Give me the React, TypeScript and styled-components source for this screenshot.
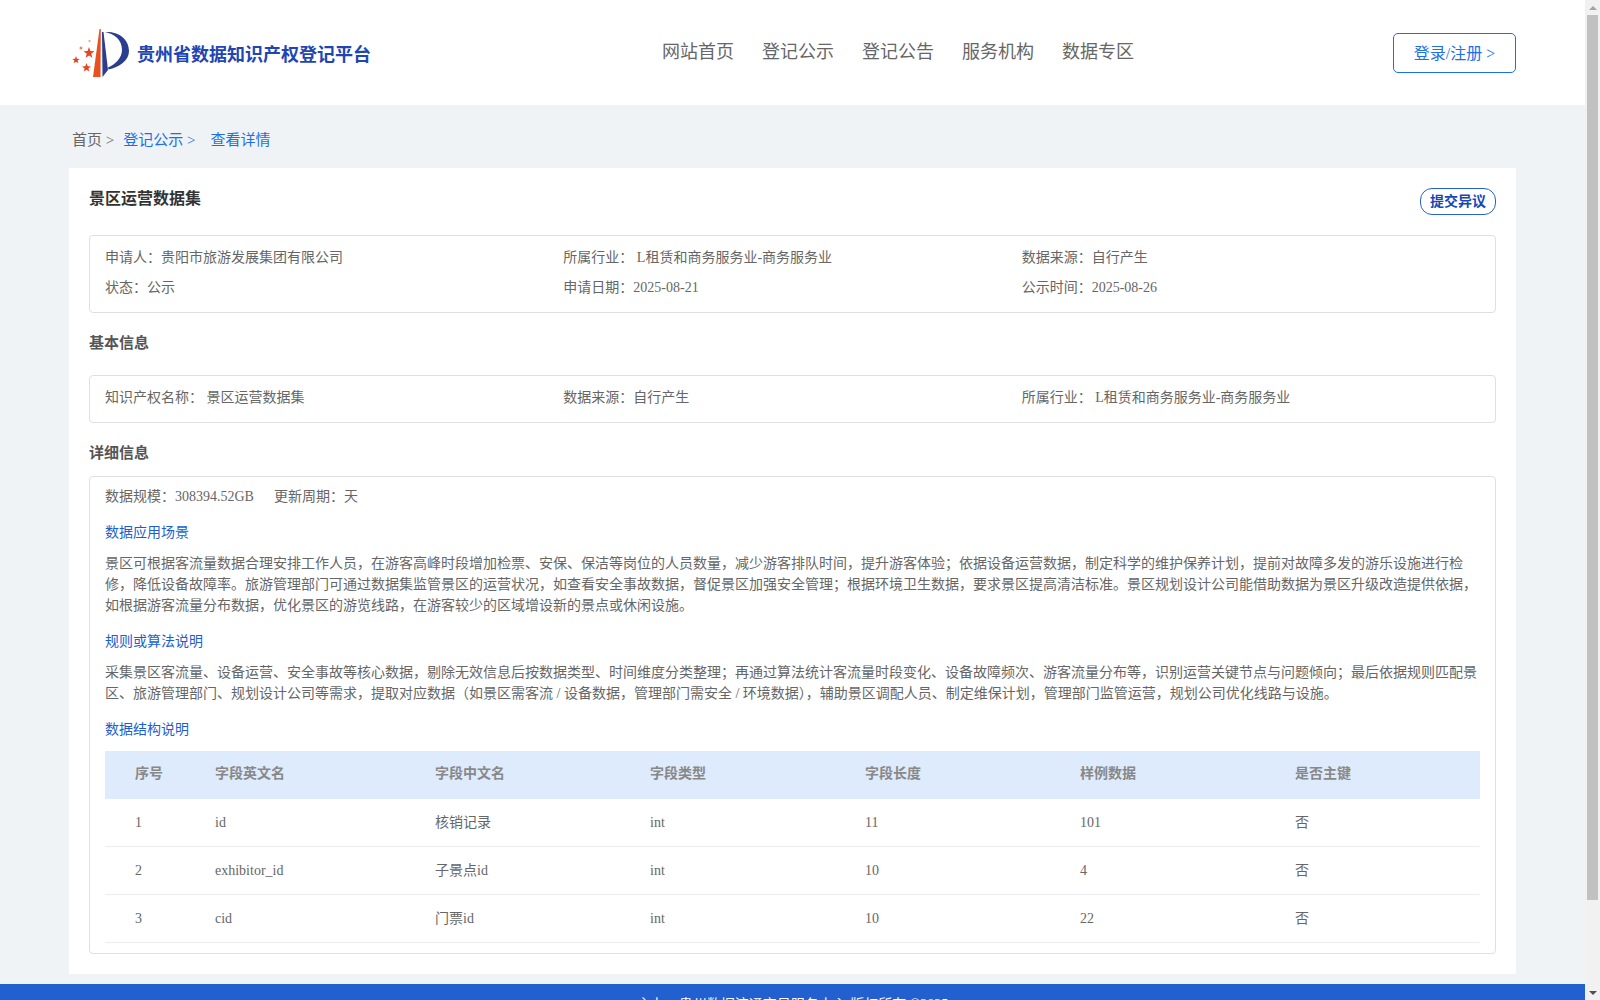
import * as React from 'react';
import styled, { createGlobalStyle } from 'styled-components';

const GlobalStyle = createGlobalStyle`
  body {
    margin: 0;
    background: #eff3f6;
    color: #666;
    font-family: "Liberation Serif", "Noto Sans CJK SC", serif;
    font-size: 14px;
  }
`;

const Frame = styled.div`
  display: flex;
  height: 100vh;
  overflow: hidden;
`;

const Page = styled.div`
  flex: 1;
  min-width: 0;
  overflow-y: auto;
  scrollbar-width: none;
`;

const ScrollBar = styled.aside`
  display: flex;
  flex-direction: column;
  flex: none;
  width: 15px;
  background: #f1f1f1;
`;

const ScrollArrow = styled.div<{ $down?: boolean }>`
  display: flex;
  justify-content: center;
  align-items: center;
  height: 15px;
  flex: none;
  &::before {
    content: '';
    border-left: 4px solid transparent;
    border-right: 4px solid transparent;
    ${(p) =>
      p.$down
        ? 'border-top: 4px solid #505050;'
        : 'border-bottom: 4px solid #a3a3a3;'}
  }
`;

const ScrollTrack = styled.div`
  flex: 1;
  padding: 0 2px;
`;

const ScrollThumb = styled.div`
  height: 885px;
  background: #c1c1c1;
`;

const Header = styled.header`
  display: flex;
  align-items: center;
  height: 105px;
  padding: 0 69px;
  background: #fff;
`;

const Brand = styled.div`
  display: flex;
  align-items: center;
  width: 302px;
  flex: none;
`;

const LogoMark = styled.svg`
  flex: none;
  margin-left: -4px;
`;

const BrandName = styled.span`
  margin-left: -8px;
  padding-top: 1px;
  font-size: 18px;
  font-weight: bold;
  color: #1d46b4;
  white-space: nowrap;
`;

const Nav = styled.nav`
  display: flex;
  gap: 28px;
  margin-left: 291px;
  padding-bottom: 5px;
`;

const NavItem = styled.a`
  font-size: 18px;
  color: #666;
`;

const LoginButton = styled.button`
  width: 123px;
  height: 40px;
  margin-left: auto;
  padding: 0 0 2px;
  border: 1px solid #1c6fe8;
  border-radius: 5px;
  background: #fff;
  color: #1c6fe8;
  font: 16px "Liberation Serif", "Noto Sans CJK SC", serif;
`;

const Main = styled.main`
  padding: 0 69px 10px;
`;

const Crumbs = styled.div`
  display: flex;
  padding: 25px 3px 16px;
  font-size: 15px;
  line-height: 21px;
`;

const Crumb = styled.span<{ $active?: boolean; $gap?: number }>`
  margin-right: ${(p) => p.$gap ?? 0}px;
  color: ${(p) => (p.$active ? '#1c6fe8' : '#666')};
  white-space: pre;
`;

const Card = styled.section`
  margin-top: 1px;
  padding: 20px 20px 20px;
  background: #fff;
`;

const TitleRow = styled.div`
  display: flex;
  justify-content: space-between;
  align-items: flex-start;
  margin-bottom: 20px;
`;

const Title = styled.h1`
  margin: 0;
  font-size: 16px;
  line-height: 22px;
  color: #333;
`;

const ObjectionButton = styled.button`
  width: 76px;
  height: 27px;
  padding: 0 0 4px;
  border: 1px solid #2563c9;
  border-radius: 12px;
  background: #fff;
  color: #1348b5;
  font: bold 14px "Liberation Serif", "Noto Sans CJK SC", serif;
`;

const Box = styled.div`
  border: 1px solid #e0e0e0;
  border-radius: 4px;
`;

const InfoBox = styled(Box)`
  display: grid;
  grid-template-columns: repeat(3, 1fr);
  padding: 7px 15px 9px;
  line-height: 30px;
`;

const SectionTitle = styled.h2<{ $after: number }>`
  margin: 19px 0 ${(p) => p.$after}px;
  font-size: 15px;
  line-height: 22px;
  color: #555;
`;

const DetailBox = styled(Box)`
  padding: 10px 15px 10px;
`;

const MetaRow = styled.div`
  display: flex;
  gap: 20px;
  line-height: 20px;
`;

const BlueHeading = styled.h3`
  margin: 15px 0 9px;
  font-size: 14px;
  font-weight: normal;
  line-height: 22px;
  color: #1a5fd0;
`;

const Paragraph = styled.p`
  margin: 0;
  line-height: 21px;
`;

const Table = styled.table`
  width: 100%;
  margin-top: 10px;
  border-collapse: collapse;
  table-layout: fixed;
`;

const HeadCell = styled.th<{ $width?: number }>`
  box-sizing: border-box;
  width: ${(p) => (p.$width ? `${p.$width}px` : 'auto')};
  height: 48px;
  padding: 0 0 2px;
  background: #deebfd;
  color: #888;
  font-size: 14px;
  line-height: 20px;
  text-align: left;
  &:first-child {
    padding-left: 30px;
  }
`;

const Cell = styled.td`
  height: 47px;
  padding: 0;
  border-bottom: 1px solid #ebedf2;
  line-height: 20px;
  &:first-child {
    padding-left: 30px;
  }
`;

const Footer = styled.footer`
  box-sizing: border-box;
  height: 112px;
  padding-top: 10px;
  background: #2260d0;
  color: #fff;
  text-align: center;
  font-size: 14px;
  line-height: 22px;
`;

const Logo = () => (
  <LogoMark width="80" height="65" viewBox="0 0 80 65">
    <polygon points="34.5,9 28,57 35.5,57 35.8,9" fill="#e8501f" />
    <path d="M37 12 L38.5 12 L43 50 L37.5 57 Z" fill="#2b3d8f" />
    <path
      d="M40 12 C52 11 64 18 64 31 C64 41 54 47 43.5 49.5 L43 47.5 C50 44.5 57 38 57 30 C57 20 50 14 40 12 Z"
      fill="#2b3d8f"
    />
    <polygon points="24,27 25.4,31 29.5,31.2 26.2,33.7 27.4,37.8 24,35.4 20.6,37.8 21.8,33.7 18.5,31.2 22.6,31" fill="#e8431f" />
    <polygon points="11,36 12,38.7 14.8,38.9 12.6,40.6 13.4,43.3 11,41.7 8.6,43.3 9.4,40.6 7.2,38.9 10,38.7" fill="#e8431f" />
    <polygon points="21.5,43 22.7,46.2 26,46.4 23.4,48.4 24.3,51.6 21.5,49.8 18.7,51.6 19.6,48.4 17,46.4 20.3,46.2" fill="#e8431f" />
    <circle cx="16" cy="28" r="1.5" fill="#ee8a60" />
    <circle cx="24.5" cy="21" r="1.1" fill="#ee9a78" />
  </LogoMark>
);

const columns = [
  { label: '序号', width: 110 },
  { label: '字段英文名', width: 220 },
  { label: '字段中文名', width: 215 },
  { label: '字段类型', width: 215 },
  { label: '字段长度', width: 215 },
  { label: '样例数据', width: 215 },
  { label: '是否主键' },
];

const rows = [
  ['1', 'id', '核销记录', 'int', '11', '101', '否'],
  ['2', 'exhibitor_id', '子景点id', 'int', '10', '4', '否'],
  ['3', 'cid', '门票id', 'int', '10', '22', '否'],
];

const App: React.FC = () => (
  <Frame>
    <GlobalStyle />
    <Page>
      <Header>
        <Brand>
          <Logo />
          <BrandName>贵州省数据知识产权登记平台</BrandName>
        </Brand>
        <Nav>
          <NavItem>网站首页</NavItem>
          <NavItem>登记公示</NavItem>
          <NavItem>登记公告</NavItem>
          <NavItem>服务机构</NavItem>
          <NavItem>数据专区</NavItem>
        </Nav>
        <LoginButton>登录/注册 &gt;</LoginButton>
      </Header>
      <Main>
        <Crumbs>
          <Crumb $gap={9}>首页 &gt;</Crumb>
          <Crumb $active $gap={15}>登记公示 &gt;</Crumb>
          <Crumb $active>查看详情</Crumb>
        </Crumbs>
        <Card>
          <TitleRow>
            <Title>景区运营数据集</Title>
            <ObjectionButton>提交异议</ObjectionButton>
          </TitleRow>
          <InfoBox>
            <div>申请人：贵阳市旅游发展集团有限公司</div>
            <div>所属行业： L租赁和商务服务业-商务服务业</div>
            <div>数据来源：自行产生</div>
            <div>状态：公示</div>
            <div>申请日期：2025-08-21</div>
            <div>公示时间：2025-08-26</div>
          </InfoBox>
          <SectionTitle $after={21}>基本信息</SectionTitle>
          <InfoBox>
            <div>知识产权名称： 景区运营数据集</div>
            <div>数据来源：自行产生</div>
            <div>所属行业： L租赁和商务服务业-商务服务业</div>
          </InfoBox>
          <SectionTitle $after={12}>详细信息</SectionTitle>
          <DetailBox>
            <MetaRow>
              <span>数据规模：308394.52GB</span>
              <span>更新周期：天</span>
            </MetaRow>
            <BlueHeading>数据应用场景</BlueHeading>
            <Paragraph>
              景区可根据客流量数据合理安排工作人员，在游客高峰时段增加检票、安保、保洁等岗位的人员数量，减少游客排队时间，提升游客体验；依据设备运营数据，制定科学的维护保养计划，提前对故障多发的游乐设施进行检修，降低设备故障率。旅游管理部门可通过数据集监管景区的运营状况，如查看安全事故数据，督促景区加强安全管理；根据环境卫生数据，要求景区提高清洁标准。景区规划设计公司能借助数据为景区升级改造提供依据，如根据游客流量分布数据，优化景区的游览线路，在游客较少的区域增设新的景点或休闲设施。
            </Paragraph>
            <BlueHeading>规则或算法说明</BlueHeading>
            <Paragraph>
              采集景区客流量、设备运营、安全事故等核心数据，剔除无效信息后按数据类型、时间维度分类整理；再通过算法统计客流量时段变化、设备故障频次、游客流量分布等，识别运营关键节点与问题倾向；最后依据规则匹配景区、旅游管理部门、规划设计公司等需求，提取对应数据（如景区需客流 / 设备数据，管理部门需安全 / 环境数据），辅助景区调配人员、制定维保计划，管理部门监管运营，规划公司优化线路与设施。
            </Paragraph>
            <BlueHeading>数据结构说明</BlueHeading>
            <Table>
              <thead>
                <tr>
                  {columns.map((c) => (
                    <HeadCell key={c.label} $width={c.width}>{c.label}</HeadCell>
                  ))}
                </tr>
              </thead>
              <tbody>
                {rows.map((row) => (
                  <tr key={row[0]}>
                    {row.map((v, i) => (
                      <Cell key={i}>{v}</Cell>
                    ))}
                  </tr>
                ))}
              </tbody>
            </Table>
          </DetailBox>
        </Card>
      </Main>
      <Footer>主办：贵州数据流通交易服务中心 版权所有 ©2025</Footer>
    </Page>
    <ScrollBar>
      <ScrollArrow />
      <ScrollTrack>
        <ScrollThumb />
      </ScrollTrack>
      <ScrollArrow $down />
    </ScrollBar>
  </Frame>
);

export default App;
